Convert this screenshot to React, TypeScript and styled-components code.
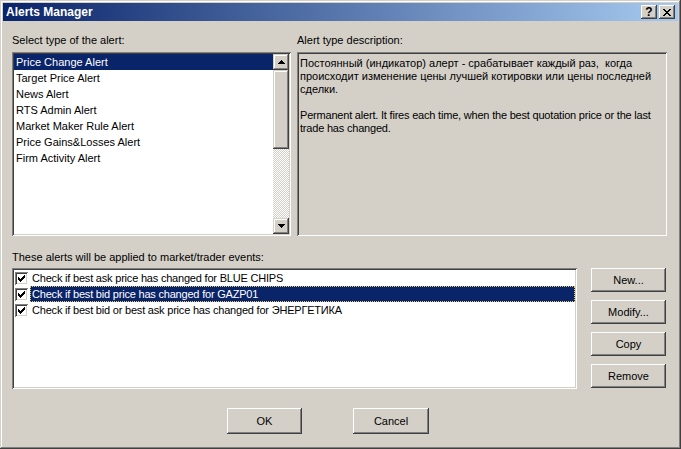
import styled, { createGlobalStyle } from "styled-components";

const GlobalStyle = createGlobalStyle`
  html, body {
    margin: 0;
    padding: 0;
    background: #d4d0c8;
  }
  body {
    font-family: "Liberation Sans", Arial, sans-serif;
    font-size: 11px;
    color: #000;
  }
  * {
    box-sizing: border-box;
  }
`;

const raised = `
  box-shadow: inset -1px -1px #404040, inset 1px 1px #ffffff,
    inset -2px -2px #808080, inset 2px 2px #d4d0c8;
`;

const sunken = `
  box-shadow: inset 1px 1px #808080, inset -1px -1px #ffffff,
    inset 2px 2px #404040, inset -2px -2px #d4d0c8;
`;

const Window = styled.div`
  width: 681px;
  height: 449px;
  padding: 3px;
  background: #d4d0c8;
  box-shadow: inset -1px -1px #404040, inset 1px 1px #d4d0c8,
    inset -2px -2px #808080, inset 2px 2px #ffffff;
  display: flex;
  flex-direction: column;
`;

const TitleBar = styled.div`
  height: 18px;
  display: flex;
  align-items: center;
  padding: 0 3px 0 3px;
  background: linear-gradient(to right, #0a246a, #a6caf0);
`;

const TitleText = styled.div`
  flex: 1;
  color: #fff;
  font-weight: bold;
  font-size: 12px;
  white-space: nowrap;
`;

const CaptionButtons = styled.div`
  display: flex;
  gap: 2px;
`;

const CaptionButton = styled.div`
  width: 16px;
  height: 14px;
  background: #d4d0c8;
  ${raised}
  display: flex;
  align-items: center;
  justify-content: center;
  font-weight: bold;
  font-size: 12px;
  line-height: 14px;
`;

const Client = styled.div`
  padding: 12px 0 0 9px;
  display: flex;
  flex-direction: column;
`;

const TopRow = styled.div`
  display: flex;
  gap: 6px;
`;

const Column = styled.div<{ $w: number }>`
  width: ${(p) => p.$w}px;
  display: flex;
  flex-direction: column;
`;

const Label = styled.div<{ $top?: number; $bottom: number }>`
  height: 14px;
  line-height: 14px;
  margin-top: ${(p) => p.$top ?? 0}px;
  margin-bottom: ${(p) => p.$bottom}px;
  white-space: nowrap;
`;

const ListBox = styled.div`
  height: 184px;
  padding: 2px;
  background: #fff;
  ${sunken}
  display: flex;
`;

const ListItems = styled.div`
  flex: 1;
  display: flex;
  flex-direction: column;
`;

const ListItem = styled.div<{ $selected?: boolean }>`
  height: 16px;
  line-height: 16px;
  padding-left: 2px;
  white-space: nowrap;
  background: ${(p) => (p.$selected ? "#0a246a" : "transparent")};
  color: ${(p) => (p.$selected ? "#fff" : "#000")};
`;

const ScrollBar = styled.div`
  width: 16px;
  display: flex;
  flex-direction: column;
`;

const ScrollButton = styled.div`
  height: 16px;
  background: #d4d0c8;
  box-shadow: inset -1px -1px #404040, inset 1px 1px #d4d0c8,
    inset -2px -2px #808080, inset 2px 2px #ffffff;
  display: flex;
  align-items: center;
  justify-content: center;
`;

const Thumb = styled(ScrollButton)<{ $h: number }>`
  height: ${(p) => p.$h}px;
`;

const Track = styled.div`
  flex: 1;
  background: repeating-conic-gradient(#d4d0c8 0 25%, #ffffff 0 50%) 0 0 / 2px
    2px;
`;

const DescriptionBox = styled.div`
  height: 184px;
  padding: 5px 3px 3px;
  background: #d4d0c8;
  ${sunken}
  line-height: 13px;
  white-space: nowrap;
`;

const Para = styled.p<{ $tight?: boolean }>`
  margin: 0 0 13px 0;
  letter-spacing: ${(p) => (p.$tight ? "-0.2px" : "normal")};
`;

const BottomRow = styled.div`
  display: flex;
  gap: 14px;
`;

const CheckList = styled.div`
  width: 565px;
  height: 121px;
  padding: 2px;
  background: #fff;
  ${sunken}
  display: flex;
  flex-direction: column;
`;

const CheckRow = styled.div`
  height: 16px;
  display: flex;
  align-items: center;
  padding-left: 1px;
`;

const CheckBox = styled.div`
  width: 13px;
  height: 13px;
  background: #fff;
  ${sunken}
  display: flex;
  align-items: center;
  justify-content: center;
`;

const CheckText = styled.div<{ $selected?: boolean }>`
  flex: 1;
  height: 16px;
  line-height: 16px;
  margin-left: 2px;
  padding-left: 2px;
  white-space: nowrap;
  letter-spacing: -0.2px;
  background: ${(p) => (p.$selected ? "#0a246a" : "transparent")};
  color: ${(p) => (p.$selected ? "#fff" : "#000")};
  outline: ${(p) => (p.$selected ? "1px dotted #e8c860" : "none")};
  outline-offset: -1px;
`;

const SideButtons = styled.div`
  display: flex;
  flex-direction: column;
  gap: 8px;
`;

const Button = styled.div<{ $w?: number; $h?: number }>`
  width: ${(p) => p.$w ?? 75}px;
  height: ${(p) => p.$h ?? 24}px;
  background: #d4d0c8;
  ${raised}
  display: flex;
  align-items: center;
  justify-content: center;
  white-space: nowrap;
`;

const Footer = styled.div`
  margin-top: 19px;
  padding-left: 215px;
  display: flex;
  gap: 51px;
`;

const ArrowUp = () => (
  <svg width="7" height="4" viewBox="0 0 7 4" shapeRendering="crispEdges">
    <path d="M3 0h1v1h1v1h1v1h1v1H0V3h1V2h1V1h1z" fill="#000" />
  </svg>
);

const ArrowDown = () => (
  <svg width="7" height="4" viewBox="0 0 7 4" shapeRendering="crispEdges">
    <path d="M0 0h7v1H6v1H5v1H4v1H3V3H2V2H1V1H0z" fill="#000" />
  </svg>
);

const checkPixels = [
  [0, 2],
  [1, 3],
  [2, 4],
  [3, 3],
  [4, 2],
  [5, 1],
  [6, 0],
];

const CheckMark = () => (
  <svg width="7" height="7" viewBox="0 0 7 7" shapeRendering="crispEdges">
    {checkPixels.map(([x, y]) => (
      <rect key={x} x={x} y={y} width="1" height="3" fill="#000" />
    ))}
  </svg>
);

const closeRows = ["11000011", "01100110", "00111100", "00011000", "00111100", "01100110", "11000011"];

const CloseGlyph = () => (
  <svg width="8" height="7" viewBox="0 0 8 7" shapeRendering="crispEdges">
    {closeRows.map((row, y) =>
      row
        .split("")
        .map((c, x) =>
          c === "1" ? <rect key={`${x}-${y}`} x={x} y={y} width="1" height="1" fill="#000" /> : null
        )
    )}
  </svg>
);

const alertTypes = [
  "Price Change Alert",
  "Target Price Alert",
  "News Alert",
  "RTS Admin Alert",
  "Market Maker Rule Alert",
  "Price Gains&Losses Alert",
  "Firm Activity Alert",
];

const alerts = [
  "Check if best ask price has changed for BLUE CHIPS",
  "Check if best bid price has changed for GAZP01",
  "Check if best bid or best ask price has changed for ЭНЕРГЕТИКА",
];

export default function App() {
  return (
    <>
      <GlobalStyle />
      <Window>
        <TitleBar>
          <TitleText>Alerts Manager</TitleText>
          <CaptionButtons>
            <CaptionButton>?</CaptionButton>
            <CaptionButton>
              <CloseGlyph />
            </CaptionButton>
          </CaptionButtons>
        </TitleBar>
        <Client>
          <TopRow>
            <Column $w={279}>
              <Label $bottom={5}>Select type of the alert:</Label>
              <ListBox>
                <ListItems>
                  {alertTypes.map((t, i) => (
                    <ListItem key={t} $selected={i === 0}>
                      {t}
                    </ListItem>
                  ))}
                </ListItems>
                <ScrollBar>
                  <ScrollButton>
                    <ArrowUp />
                  </ScrollButton>
                  <Thumb $h={79} />
                  <Track />
                  <ScrollButton>
                    <ArrowDown />
                  </ScrollButton>
                </ScrollBar>
              </ListBox>
            </Column>
            <Column $w={370}>
              <Label $bottom={5}>Alert type description:</Label>
              <DescriptionBox>
                <Para>
                  Постоянный (индикатор) алерт - срабатывает каждый раз,&nbsp; когда
                  <br />
                  происходит изменение цены лучшей котировки или цены последней
                  <br />
                  сделки.
                </Para>
                <Para $tight>
                  Permanent alert. It fires each time, when the best quotation price or the last
                  <br />
                  trade has changed.
                </Para>
              </DescriptionBox>
            </Column>
          </TopRow>
          <Label $top={14} $bottom={4}>
            These alerts will be applied to market/trader events:
          </Label>
          <BottomRow>
            <CheckList>
              {alerts.map((a, i) => (
                <CheckRow key={a}>
                  <CheckBox>
                    <CheckMark />
                  </CheckBox>
                  <CheckText $selected={i === 1}>{a}</CheckText>
                </CheckRow>
              ))}
            </CheckList>
            <SideButtons>
              <Button>New...</Button>
              <Button>Modify...</Button>
              <Button>Copy</Button>
              <Button>Remove</Button>
            </SideButtons>
          </BottomRow>
          <Footer>
            <Button $h={26}>OK</Button>
            <Button $w={76} $h={26}>
              Cancel
            </Button>
          </Footer>
        </Client>
      </Window>
    </>
  );
}
